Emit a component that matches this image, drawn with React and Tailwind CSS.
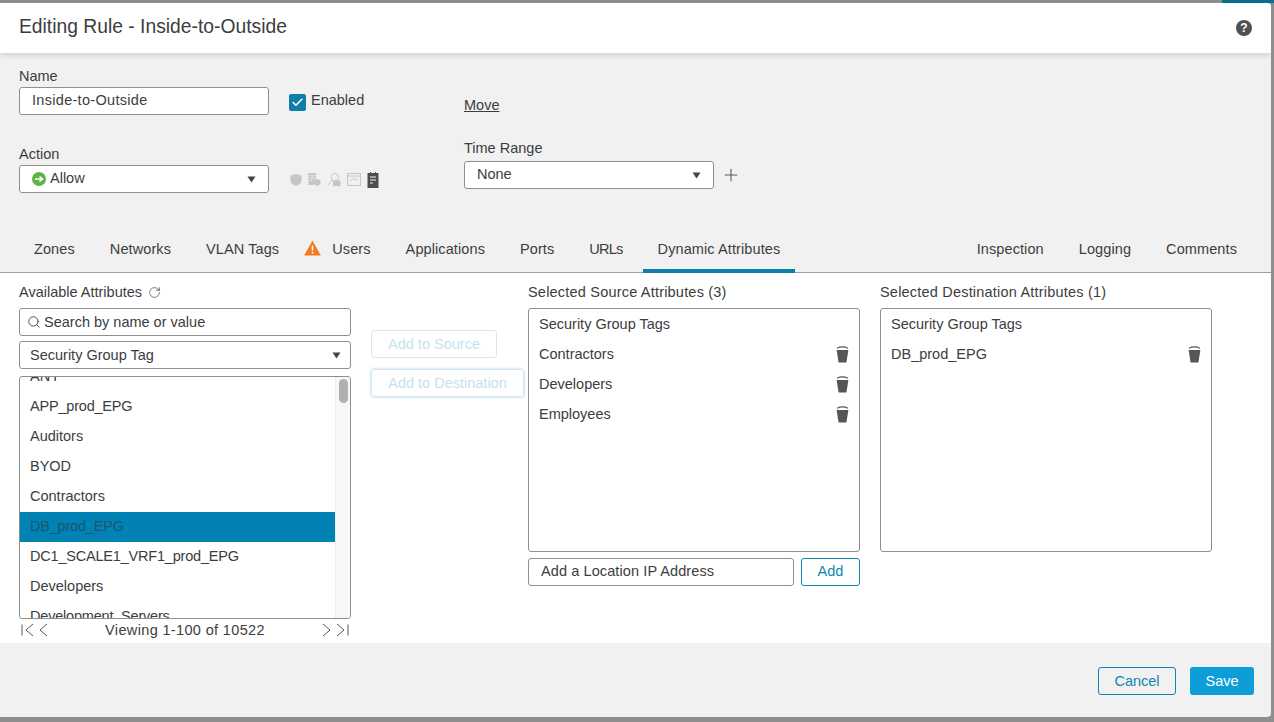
import React from 'react';
import { Search, RotateCw, Plus, Check } from 'lucide-react';

const tabsLeft = ['Zones', 'Networks', 'VLAN Tags', 'Users', 'Applications', 'Ports', 'URLs', 'Dynamic Attributes'];
const tabsRight = ['Inspection', 'Logging', 'Comments'];
const attributes = ['ANY', 'APP_prod_EPG', 'Auditors', 'BYOD', 'Contractors', 'DB_prod_EPG', 'DC1_SCALE1_VRF1_prod_EPG', 'Developers', 'Development_Servers'];

function Caret() {
    return (
        <svg width="9" height="7" viewBox="0 0 9 7" className="shrink-0">
            <path d="M0.5 0.5h8L4.500 6.500z" fill="#444" />
        </svg>
    );
}

function Trash() {
    return (
        <svg width="13" height="17" viewBox="0 0 13 17" className="shrink-0">
            <path d="M1 2.200C4 0.800 9 0.800 12 2.200" fill="none" stroke="#55565a" strokeWidth="1.200" />
            <path d="M0.600 4h11.800l-1.900 11.900c-.1.400-.3.600-.7.600H3.200c-.4 0-.6-.2-.7-.6z" fill="#55565a" />
        </svg>
    );
}

function ActionIcons() {
    return (
        <div className="flex items-center gap-[6px] ml-[21px] mt-[1px]">
            <svg width="12" height="14" viewBox="0 0 13 14">
                <path d="M6.5 0.5l6 2v4.5c0 3.2-2.6 5.4-6 6.5-3.4-1.1-6-3.3-6-6.5V2.500z" fill="#c4c5c7" />
            </svg>
            <svg width="13" height="15" viewBox="0 0 14 15">
                <path d="M0.5 0.500h8v7h-2v6h-6z" fill="#c4c5c7" />
                <path d="M2 3.500h5M2 6h5M2 8.500h3" stroke="#f1f1f1" strokeWidth="1" />
                <path d="M10 7l3.500 1.200v2.500c0 1.800-1.500 3-3.500 3.800-2-.8-3.500-2-3.500-3.800V8.200z" fill="#c4c5c7" />
            </svg>
            <svg width="14" height="15" viewBox="0 0 15 15">
                <circle cx="8.500" cy="5" r="4" fill="none" stroke="#c4c5c7" strokeWidth="1" />
                <path d="M5.500 8L0.800 14" stroke="#c4c5c7" strokeWidth="1" />
                <rect x="6.500" y="8.500" width="8" height="6" fill="#c4c5c7" />
            </svg>
            <svg width="14" height="13" viewBox="0 0 14 13">
                <rect x="0.500" y="0.500" width="13" height="12" fill="none" stroke="#c4c5c7" />
                <path d="M0.500 3h13" stroke="#c4c5c7" />
                <path d="M3 8c2-3 6-3 8 0" fill="none" stroke="#c4c5c7" />
            </svg>
            <svg width="12" height="16" viewBox="0 0 11 16">
                <path d="M0 1h2.500V0h1v1h4V0h1v1H11v15H0z" fill="#4c4d50" />
                <path d="M2.500 5h6M2.500 8h6M2.500 11h3" stroke="#f1f1f1" strokeWidth="1.200" />
            </svg>
        </div>
    );
}

function SelectedBox({ title, items }) {
    return (
        <div className="h-[244px] border border-[#8f8f8f] rounded-[3px] bg-white pl-[10px] pr-[10px] pt-[5px]">
            <div className="h-[20px] leading-[20px] mb-[5px]">{title}</div>
            {items.map((item) => (
                <div key={item} className="h-[30px] flex items-center justify-between">
                    <span className="pt-[2px]">{item}</span>
                    <Trash />
                </div>
            ))}
        </div>
    );
}

export default function App() {
    return (
        <div className="relative w-[1274px] h-[722px] overflow-hidden bg-[#8e8e8e] pt-[3px] pb-[5px] pr-[3px] text-[14.5px] text-[#3c3d40] antialiased font-['Liberation_Sans',Arial,sans-serif]">
            <div className="absolute top-0 right-0 w-[52px] h-[3px] bg-[#0d6d8c]"></div>
            <div className="relative h-full flex flex-col bg-[#f1f1f1] rounded-tr-[4px] rounded-br-[4px] overflow-hidden">
                {/* header */}
                <div className="relative h-[50px] shrink-0 bg-white flex items-center justify-between pl-[19px] pr-[19px] shadow-[0_2px_6px_rgba(0,0,0,0.15)]">
                    <h1 className="text-[19.3px] leading-[24px] mb-[3px]">Editing Rule - Inside-to-Outside</h1>
                    <div className="w-[16px] h-[16px] rounded-full bg-[#505155] text-white text-[12px] font-bold flex items-center justify-center">?</div>
                </div>

                {/* form */}
                <div className="h-[175px] shrink-0 pt-[13px] pl-[19px] flex">
                    <div className="w-[445px]">
                        <div className="h-[20px] leading-[20px]">Name</div>
                        <div className="flex items-start">
                            <div className="w-[250px] h-[28px] mt-[1px] border border-[#8f8f8f] rounded-[3px] bg-white pl-[12px] leading-[24px] tracking-[0.3px]">Inside-to-Outside</div>
                            <label className="flex items-start ml-[20px] mt-[4px]">
                                <span className="w-[17px] h-[17px] mt-[4px] rounded-[2px] bg-[#0d7fa8] flex items-center justify-center">
                                    <Check size={13} strokeWidth={3} color="#fff" />
                                </span>
                                <span className="ml-[5px] leading-[20px]">Enabled</span>
                            </label>
                        </div>
                        <div className="h-[20px] leading-[20px] mt-[29px]">Action</div>
                        <div className="flex items-center mt-[1px]">
                            <div className="w-[250px] h-[28px] border border-[#8f8f8f] rounded-[3px] bg-white pl-[12px] pr-[12px] flex items-center justify-between">
                                <span className="flex items-center gap-[4px]">
                                    <svg width="14" height="14" viewBox="0 0 14 14">
                                        <circle cx="7" cy="7" r="7" fill="#5fb346" />
                                        <path d="M3 7h7M7.500 4.500L10.500 7l-3 2.500" fill="none" stroke="#fff" strokeWidth="1.600" />
                                    </svg>
                                    Allow
                                </span>
                                <Caret />
                            </div>
                            <ActionIcons />
                        </div>
                    </div>
                    <div>
                        <div className="mt-[29px] underline leading-[20px]">Move</div>
                        <div className="mt-[23px] leading-[20px]">Time Range</div>
                        <div className="flex items-center mt-[3px]">
                            <div className="w-[250px] h-[28px] border border-[#8f8f8f] rounded-[3px] bg-white pl-[12px] pr-[12px] flex items-center justify-between">
                                <span>None</span>
                                <Caret />
                            </div>
                            <Plus size={20} strokeWidth={1.25} className="ml-[7px]" color="#55565a" />
                        </div>
                    </div>
                </div>

                {/* tabs */}
                <div className="h-[45px] shrink-0 flex justify-between border-b border-[#a0a0a0] pl-[19px] pr-[19px] tracking-[0.1px]">
                    <div className="flex gap-[5px]">
                        {tabsLeft.map((tab) => (
                            <div key={tab} className={tab === 'Dynamic Attributes' ? 'h-[45px] px-[15px] pt-[11px] border-b-[4px] border-[#0d7fa8] leading-[20px]' : tab === 'URLs' ? 'h-[45px] px-[15px] pt-[11px] leading-[20px] tracking-[-0.75px]' : 'h-[45px] px-[15px] pt-[11px] leading-[20px] flex items-start'}>
                                {tab === 'Users' && (
                                    <svg width="17" height="16" viewBox="0 0 17 16" className="-ml-[10px] mr-[11px] mt-[1px]">
                                        <path d="M8.500 0.500L16.800 15.500H0.200z" fill="#f47a1f" />
                                        <path d="M8.500 5.500v5M8.500 11.800v1.800" stroke="#fff" strokeWidth="1.500" />
                                    </svg>
                                )}
                                {tab}
                            </div>
                        ))}
                    </div>
                    <div className="flex gap-[5px]">
                        {tabsRight.map((tab) => (
                            <div key={tab} className="h-[45px] px-[15px] pt-[11px] leading-[20px]">{tab}</div>
                        ))}
                    </div>
                </div>

                {/* attributes */}
                <div className="h-[370px] shrink-0 bg-white pl-[19px] pt-[9px] flex">
                    <div className="w-[332px]">
                        <div className="h-[20px] leading-[20px] flex items-center gap-[6px]">
                            Available Attributes
                            <RotateCw size={13} strokeWidth={1.25} />
                        </div>
                        <div className="h-[28px] mt-[6px] border border-[#8f8f8f] rounded-[3px] flex items-center pl-[7px] gap-[3px]">
                            <Search size={14} strokeWidth={1.5} />
                            <span className="pt-[1px]">Search by name or value</span>
                        </div>
                        <div className="h-[28px] mt-[5px] border border-[#8f8f8f] rounded-[3px] flex items-center justify-between pl-[10px] pr-[9px]">
                            <span className="pt-[1px]">Security Group Tag</span>
                            <Caret />
                        </div>
                        <div className="h-[243px] mt-[7px] border border-[#8f8f8f] rounded-[3px] overflow-hidden flex">
                            <div className="w-[315px] -mt-[15px]">
                                {attributes.map((attr) => (
                                    <div key={attr} className={attr === 'DB_prod_EPG' ? 'h-[30px] bg-[#0082b4] text-[#1a5670] pl-[10px] leading-[28px] tracking-[-0.2px]' : attr.includes('_') ? 'h-[30px] pl-[10px] leading-[28px] tracking-[-0.2px]' : 'h-[30px] pl-[10px] leading-[28px]'}>{attr}</div>
                                ))}
                            </div>
                            <div className="flex-1 bg-[#f7f7f7] border-l border-[#ececec] pt-[2px] pl-[3px]">
                                <div className="w-[9px] h-[24px] rounded-full bg-[#b0b0b0]"></div>
                            </div>
                        </div>
                        <div className="h-[22px] flex items-center justify-between px-[2px]">
                            <div className="flex items-center gap-[5px]">
                                <svg width="13" height="14" viewBox="0 0 13 14" fill="none" stroke="#55565a" strokeWidth="1"><path d="M1 1.500v11M12 1L5 7l7 6" /></svg>
                                <svg width="9" height="14" viewBox="0 0 9 14" fill="none" stroke="#55565a" strokeWidth="1"><path d="M8 1L1 7l7 6" /></svg>
                            </div>
                            <span className="tracking-[0.35px] pt-[1px]">Viewing 1-100 of 10522</span>
                            <div className="flex items-center gap-[5px]">
                                <svg width="9" height="14" viewBox="0 0 9 14" fill="none" stroke="#55565a" strokeWidth="1"><path d="M1 1l7 6-7 6" /></svg>
                                <svg width="13" height="14" viewBox="0 0 13 14" fill="none" stroke="#55565a" strokeWidth="1"><path d="M1 1l7 6-7 6M12 1.500v11" /></svg>
                            </div>
                        </div>
                    </div>

                    <div className="w-[153px] ml-[20px] pt-[48px] text-[#c3e3ee]">
                        <div className="w-[126px] h-[28px] pt-[2px] border border-[#d3e8f0] rounded-[3px] flex items-center justify-center">Add to Source</div>
                        <div className="w-[153px] h-[28px] pt-[2px] mt-[11px] border border-[#cfe8f1] rounded-[3px] shadow-[0_0_3px_rgba(13,127,168,0.35)] flex items-center justify-center">Add to Destination</div>
                    </div>

                    <div className="w-[332px] ml-[4px]">
                        <div className="h-[20px] leading-[20px] tracking-[0.2px]">Selected Source Attributes (3)</div>
                        <div className="mt-[6px]">
                            <SelectedBox title="Security Group Tags" items={['Contractors', 'Developers', 'Employees']} />
                        </div>
                        <div className="flex justify-between mt-[6px]">
                            <div className="w-[266px] h-[28px] border border-[#8f8f8f] rounded-[3px] pl-[12px] leading-[24px] tracking-[0.1px]">Add a Location IP Address</div>
                            <div className="w-[59px] h-[28px] border border-[#0d87b0] rounded-[3px] text-[#0d87b0] flex items-center justify-center">Add</div>
                        </div>
                    </div>

                    <div className="w-[332px] ml-[20px]">
                        <div className="h-[20px] leading-[20px] tracking-[0.2px]">Selected Destination Attributes (1)</div>
                        <div className="mt-[6px]">
                            <SelectedBox title="Security Group Tags" items={['DB_prod_EPG']} />
                        </div>
                    </div>
                </div>

                {/* footer */}
                <div className="flex-1 flex justify-end items-start pt-[24px] pr-[17px] gap-[14px]">
                    <div className="w-[78px] h-[28px] pt-[2px] border border-[#0d87b0] rounded-[3px] text-[#0d87b0] flex items-center justify-center">Cancel</div>
                    <div className="w-[64px] h-[28px] pt-[2px] rounded-[3px] bg-[#0d9ed8] text-white flex items-center justify-center">Save</div>
                </div>
            </div>
        </div>
    );
}
